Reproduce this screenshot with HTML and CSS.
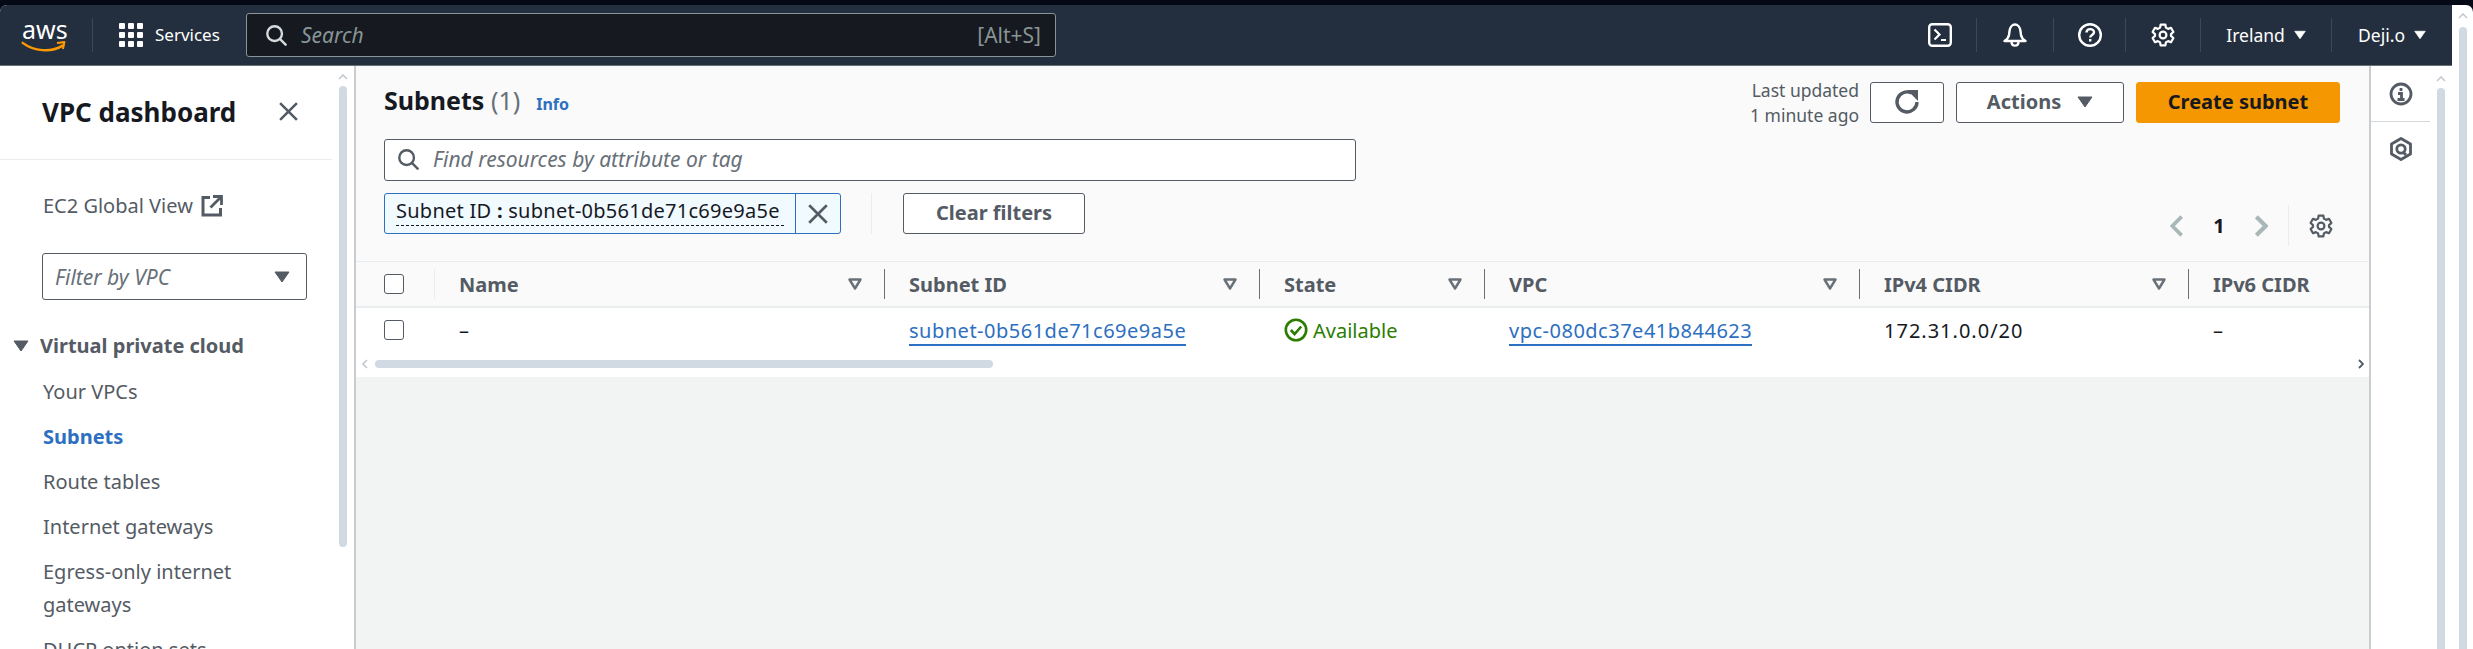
FILE: index.html
```html
<!DOCTYPE html>
<html lang="en">
<head>
  <meta charset="UTF-8">
  <title>Subnets | VPC Console</title>
  <link rel="stylesheet" href="styles.css">
</head>
<body>
  <svg class="sprite" xmlns="http://www.w3.org/2000/svg">
    <symbol id="gear" viewBox="0 0 24 24">
      <path d="M9.6 1.600h4.800l.5 3 2.200 1.300 2.900-1.100 2.400 4.200-2.400 2.100v1.800l2.400 2.100-2.400 4.200-2.900-1.100-2.200 1.300-.5 3H9.600l-.5-3-2.200-1.300-2.900 1.100-2.400-4.200L4 12.900v-1.800L1.600 9l2.400-4.200 2.900 1.100 2.200-1.300z" fill="none" stroke="currentColor" stroke-width="2.200" stroke-linejoin="round"/>
      <circle cx="12" cy="12" r="3.400" fill="none" stroke="currentColor" stroke-width="2.200"/>
    </symbol>
    <symbol id="caret" viewBox="0 0 16 12">
      <path d="M1 1h14L8 11z" fill="currentColor" stroke="currentColor" stroke-linejoin="round"/>
    </symbol>
    <symbol id="sort" viewBox="0 0 14 12">
      <path d="M1.500 1.500h11L7 10.500z" fill="none" stroke="currentColor" stroke-width="2.400" stroke-linejoin="round"/>
    </symbol>
    <symbol id="search" viewBox="0 0 24 24">
      <circle cx="10.500" cy="10.500" r="8" fill="none" stroke="currentColor" stroke-width="2.600"/>
      <path d="M16.500 16.500l6 6" fill="none" stroke="currentColor" stroke-width="2.600" stroke-linecap="round"/>
    </symbol>
    <symbol id="close" viewBox="0 0 20 20">
      <path d="M2 2l16 16M18 2L2 18" fill="none" stroke="currentColor" stroke-width="2.400"/>
    </symbol>
    <symbol id="chev-up" viewBox="0 0 10 6">
      <path d="M1 5l4-4 4 4" fill="none" stroke="currentColor" stroke-width="1.600"/>
    </symbol>
    <symbol id="chev-left" viewBox="0 0 6 10">
      <path d="M5 1L1 5l4 4" fill="none" stroke="currentColor" stroke-width="1.600"/>
    </symbol>
    <symbol id="chev-right" viewBox="0 0 6 10">
      <path d="M1 1l4 4-4 4" fill="none" stroke="currentColor" stroke-width="1.800"/>
    </symbol>
  </svg>

  <div class="page">
    <div class="console">
      <header class="topbar">
        <div class="logo">
          <span class="logo-text">aws</span>
          <svg class="logo-smile" viewBox="0 0 48 14"><path d="M1 2c12 9 30 11 43 3" fill="none" stroke="#f90" stroke-width="2.600" stroke-linecap="round"/><path d="M38 2.200l8-1-1.600 7.500" fill="none" stroke="#f90" stroke-width="2.200" stroke-linejoin="round"/></svg>
        </div>
        <div class="services">
          <div class="grid-icon"><i></i><i></i><i></i><i></i><i></i><i></i><i></i><i></i><i></i></div>
          <span>Services</span>
        </div>
        <div class="top-search">
          <svg class="top-search-icon"><use href="#search"/></svg>
          <span class="top-search-text">Search</span>
          <span class="top-search-key">[Alt+S]</span>
        </div>
        <div class="top-right">
          <div class="top-item terminal">
            <svg class="top-icon" viewBox="0 0 24 24"><rect x="1.200" y="1.200" width="21.600" height="21.600" rx="3" fill="none" stroke="#fff" stroke-width="2.400"/><path d="M6.500 6.500l5 5-5 5" fill="none" stroke="#fff" stroke-width="2.200"/><path d="M13 17h5" stroke="#fff" stroke-width="2.200"/></svg>
          </div>
          <div class="top-item bell">
            <svg class="top-icon" viewBox="0 0 24 24"><path d="M1.500 18c2.500-1.500 4-3 4.500-6l.5-4C7 4 9.500 1.500 12 1.500S17 4 17.500 8l.5 4c.5 3 2 4.500 4.500 6z" fill="none" stroke="#fff" stroke-width="2.400" stroke-linejoin="round"/><path d="M8.500 18.500c0 5.500 7 5.500 7 0" fill="none" stroke="#fff" stroke-width="2.400"/></svg>
          </div>
          <div class="top-item help">
            <svg class="top-icon" viewBox="0 0 24 24"><circle cx="12" cy="12" r="10.800" fill="none" stroke="#fff" stroke-width="2.400"/><path d="M8.500 9.500c0-4.500 7.500-4.500 7.500-.300 0 2.800-3.800 2.800-3.800 5.300" fill="none" stroke="#fff" stroke-width="2.400"/><path d="M12.200 16v2.500" stroke="#fff" stroke-width="2.400"/></svg>
          </div>
          <div class="top-item cog">
            <svg class="top-icon"><use href="#gear"/></svg>
          </div>
          <div class="top-item region">
            <span>Ireland</span>
            <svg class="top-caret"><use href="#caret"/></svg>
          </div>
          <div class="top-item account">
            <span>Deji.o</span>
            <svg class="top-caret"><use href="#caret"/></svg>
          </div>
        </div>
      </header>

      <div class="layout">
        <aside class="sidebar">
          <div class="side-content">
            <div class="side-head">
              <h2>VPC dashboard</h2>
              <svg class="side-close"><use href="#close"/></svg>
            </div>
            <div class="side-link">
              <span>EC2 Global View</span>
              <svg class="ext-icon" viewBox="0 0 22 22"><path d="M9 2.500H2v17.500h17.500V13" fill="none" stroke="currentColor" stroke-width="3"/><path d="M12 1.500h8.500V10M20 2L9.500 12.500" fill="none" stroke="currentColor" stroke-width="2.800"/></svg>
            </div>
            <div class="side-filter">
              <span>Filter by VPC</span>
              <svg class="side-caret"><use href="#caret"/></svg>
            </div>
            <div class="side-section">
              <svg class="section-caret"><use href="#caret"/></svg>
              <span>Virtual private cloud</span>
            </div>
            <ul class="side-list">
              <li>Your VPCs</li>
              <li class="active">Subnets</li>
              <li>Route tables</li>
              <li>Internet gateways</li>
              <li>Egress-only internet gateways</li>
              <li>DHCP option sets</li>
            </ul>
          </div>
          <div class="vscroll">
            <svg class="scroll-up"><use href="#chev-up"/></svg>
            <div class="scroll-thumb short"></div>
          </div>
        </aside>

        <main class="main">
          <section class="list-head">
            <div class="head-row">
              <div class="head-title">
                <h1>Subnets <span class="count">(1)</span></h1>
                <a class="info">Info</a>
              </div>
              <div class="head-actions">
                <div class="updated">Last updated<br>1 minute ago</div>
                <button class="btn btn-refresh">
                  <svg class="refresh-icon" viewBox="0 0 26 26"><path d="M17.500 4A10 10 0 1 0 23 13" fill="none" stroke="currentColor" stroke-width="3.400"/><path d="M15.500 2H23v7.500z" fill="currentColor" stroke="currentColor" stroke-width="2"/></svg>
                </button>
                <button class="btn btn-actions">Actions <svg class="btn-caret"><use href="#caret"/></svg></button>
                <button class="btn btn-primary">Create subnet</button>
              </div>
            </div>
            <div class="find">
              <svg class="find-icon"><use href="#search"/></svg>
              <span>Find resources by attribute or tag</span>
            </div>
            <div class="filter-row">
              <div class="chip">
                <div class="chip-body"><span class="chip-text">Subnet ID <b>:</b> subnet-0b561de71c69e9a5e</span></div>
                <span class="chip-close"><svg class="chip-x"><use href="#close"/></svg></span>
              </div>
              <div class="filter-sep"></div>
              <button class="btn btn-clear">Clear filters</button>
              <div class="pager">
                <svg class="pager-arrow"><use href="#chev-left"/></svg>
                <span class="pager-num">1</span>
                <svg class="pager-arrow"><use href="#chev-right"/></svg>
                <div class="pager-gear"><svg class="gear-icon"><use href="#gear"/></svg></div>
              </div>
            </div>
          </section>

          <section class="table-wrap">
            <table class="subnets">
              <colgroup>
                <col class="col-check">
                <col class="col-name">
                <col class="col-subnet">
                <col class="col-state">
                <col class="col-vpc">
                <col class="col-cidr4">
                <col class="col-cidr6">
              </colgroup>
              <thead>
                <tr>
                  <th class="check-cell"><div class="th-inner light"><span class="checkbox"></span></div></th>
                  <th><div class="th-inner"><span>Name</span><svg class="sort"><use href="#sort"/></svg></div></th>
                  <th><div class="th-inner"><span>Subnet ID</span><svg class="sort"><use href="#sort"/></svg></div></th>
                  <th><div class="th-inner"><span>State</span><svg class="sort"><use href="#sort"/></svg></div></th>
                  <th><div class="th-inner"><span>VPC</span><svg class="sort"><use href="#sort"/></svg></div></th>
                  <th><div class="th-inner"><span>IPv4 CIDR</span><svg class="sort"><use href="#sort"/></svg></div></th>
                  <th><div class="th-inner last"><span>IPv6 CIDR</span></div></th>
                </tr>
              </thead>
              <tbody>
                <tr>
                  <td class="check-cell"><span class="checkbox"></span></td>
                  <td>–</td>
                  <td><a class="link">subnet-0b561de71c69e9a5e</a></td>
                  <td>
                    <span class="status">
                      <svg class="status-icon" viewBox="0 0 24 24"><circle cx="12" cy="12" r="10.200" fill="none" stroke="currentColor" stroke-width="2.600"/><path d="M6.800 12l3.800 4 6.600-7.500" fill="none" stroke="currentColor" stroke-width="2.600"/></svg>
                      Available
                    </span>
                  </td>
                  <td><a class="link">vpc-080dc37e41b844623</a></td>
                  <td class="cidr">172.31.0.0/20</td>
                  <td>–</td>
                </tr>
              </tbody>
            </table>
            <div class="hscroll">
              <svg class="hscroll-left"><use href="#chev-left"/></svg>
              <div class="hscroll-thumb"></div>
              <svg class="hscroll-right"><use href="#chev-right"/></svg>
            </div>
          </section>
        </main>

        <aside class="tools">
          <div class="tools-icons">
            <div class="tool first">
              <svg class="tool-icon" viewBox="0 0 24 24"><circle cx="12" cy="12" r="10" fill="none" stroke="currentColor" stroke-width="2.800"/><path d="M12 6v3M9 11.500h3.500V17M8.500 17.500h7" fill="none" stroke="currentColor" stroke-width="2.800"/></svg>
            </div>
            <div class="tool second">
              <svg class="tool-icon" viewBox="0 0 24 24"><path d="M12 1.500l9.500 5.500v10L12 22.500 2.500 17V7z" fill="none" stroke="currentColor" stroke-width="2.800" stroke-linejoin="round"/><circle cx="12" cy="12" r="4.200" fill="none" stroke="currentColor" stroke-width="2.800"/><path d="M14 15l3 3" stroke="currentColor" stroke-width="2.800"/></svg>
            </div>
          </div>
          <div class="vscroll tools-scroll">
            <svg class="scroll-up"><use href="#chev-up"/></svg>
            <div class="scroll-thumb"></div>
          </div>
        </aside>
      </div>
    </div>

    <div class="vscroll page-scroll">
      <svg class="scroll-up"><use href="#chev-up"/></svg>
      <div class="scroll-thumb"></div>
    </div>
  </div>
</body>
</html>
```

FILE: styles.css
```css
* {
  box-sizing: border-box;
}
html, body {
  height: 100%;
}
body {
  margin: 0;
  background: #050815;
  padding-top: 5px;
  overflow: hidden;
  font-family: "Noto Sans", Arial, sans-serif;
  font-size: 20px;
  color: #16191f;
}
h1, h2, ul {
  margin: 0;
  padding: 0;
}
svg {
  display: block;
  flex: none;
}
.sprite {
  display: none;
}
.page {
  display: flex;
  height: 644px;
  background: #fff;
  border-radius: 7px 7px 0 0;
  overflow: hidden;
}
.console {
  flex: 1;
  min-width: 0;
  display: flex;
  flex-direction: column;
}

/* top navigation */
.topbar {
  flex: none;
  display: flex;
  align-items: center;
  height: 61px;
  padding: 0 0 1px 20px;
  background: #232f3e;
  border-bottom: 1px solid #687078;
  color: #fff;
}
.logo {
  width: 73px;
  height: 34px;
  border-right: 1px solid #414750;
}
.logo-text {
  display: block;
  font-size: 25px;
  line-height: 22px;
  padding-left: 2px;
}
.logo-smile {
  width: 48px;
  height: 13px;
  margin-top: 1px;
}
.services {
  display: flex;
  align-items: center;
  margin-left: 26px;
  width: 127px;
  font-size: 17px;
}
.grid-icon {
  display: grid;
  grid-template-columns: repeat(3, 6px);
  grid-template-rows: repeat(3, 6px);
  gap: 3px;
  margin-right: 12px;
}
.grid-icon i {
  background: #fff;
  border-radius: 1px;
}
.top-search {
  display: flex;
  align-items: center;
  width: 810px;
  height: 44px;
  padding: 0 14px 0 18px;
  background: #16191f;
  border: 1px solid #879596;
  border-radius: 3px;
}
.top-search-icon {
  width: 22px;
  height: 22px;
  color: #d5dbdb;
}
.top-search-text {
  margin-left: 14px;
  font-style: italic;
  font-size: 21px;
  color: #879596;
}
.top-search-key {
  margin-left: auto;
  font-size: 21px;
  color: #879596;
}
.top-right {
  margin-left: auto;
  display: flex;
  align-items: center;
}
.top-item {
  display: flex;
  align-items: center;
  justify-content: center;
  height: 34px;
  border-left: 1px solid #414750;
  font-size: 17.5px;
}
.top-item.terminal {
  width: 72px;
  border-left: 0;
}
.top-item.bell {
  width: 77px;
}
.top-item.help {
  width: 72px;
}
.top-item.cog {
  width: 75px;
}
.top-item.region {
  width: 131px;
}
.top-item.account {
  width: 121px;
}
.top-icon {
  width: 24px;
  height: 24px;
}
.top-caret {
  width: 12px;
  height: 10px;
  margin-left: 9px;
}

/* main three columns */
.layout {
  flex: 1;
  min-height: 0;
  display: flex;
}

/* left navigation */
.sidebar {
  flex: none;
  display: flex;
  width: 356px;
  border-right: 2px solid #c9cdd1;
  overflow: hidden;
}
.side-content {
  width: 332px;
  flex: none;
}
.side-head {
  display: flex;
  align-items: center;
  justify-content: space-between;
  height: 94px;
  padding: 0 33px 2px 42px;
  border-bottom: 1px solid #eaeded;
}
.side-head h2 {
  font-size: 26px;
  font-weight: 700;
}
.side-close {
  width: 21px;
  height: 21px;
  color: #545b64;
}
.side-link {
  display: flex;
  align-items: center;
  margin-top: 32px;
  padding-left: 43px;
  color: #545b64;
  line-height: 28px;
}
.ext-icon {
  width: 22px;
  height: 22px;
  margin-left: 8px;
}
.side-filter {
  display: flex;
  align-items: center;
  justify-content: space-between;
  width: 265px;
  height: 47px;
  margin: 33px 0 0 42px;
  padding: 0 16px 0 12px;
  border: 1px solid #545b64;
  border-radius: 3px;
  font-size: 21px;
  font-style: italic;
  color: #687078;
}
.side-caret {
  width: 16px;
  height: 12px;
  color: #545b64;
}
.side-section {
  display: flex;
  align-items: center;
  margin-top: 31px;
  padding-left: 13px;
  font-weight: 700;
  color: #545b64;
  line-height: 30px;
}
.section-caret {
  width: 16px;
  height: 12px;
  margin-right: 11px;
}
.side-list {
  list-style: none;
  margin-top: 14px;
  padding-left: 43px;
  padding-right: 70px;
  color: #545b64;
}
.side-list li {
  margin-bottom: 12px;
  line-height: 33px;
}
.side-list .active {
  color: #2d6fc0;
  font-weight: 700;
}

/* scrollbars */
.vscroll {
  flex: none;
  width: 22px;
  display: flex;
  flex-direction: column;
  align-items: center;
  padding-top: 8px;
  color: #c4c9cf;
}
.scroll-up {
  width: 10px;
  height: 6px;
}
.scroll-thumb {
  flex: 1;
  width: 8px;
  margin-top: 6px;
  background: #d1d9e3;
  border-radius: 4px 4px 0 0;
}
.scroll-thumb.short {
  flex: none;
  height: 461px;
  border-radius: 4px;
}
.page-scroll {
  width: 21px;
  padding-top: 8px;
}
.page-scroll .scroll-thumb {
  margin-top: 8px;
}

/* list header */
.main {
  flex: 1;
  min-width: 0;
  background: #f2f3f3;
}
.list-head {
  height: 196px;
  padding: 16px 29px 0 28px;
  background: #fafafa;
  border-bottom: 1px solid #eaeded;
}
.head-row {
  display: flex;
  justify-content: space-between;
  height: 41px;
}
.head-title {
  display: flex;
  align-items: baseline;
}
.head-title h1 {
  font-size: 25px;
  font-weight: 700;
  line-height: 36px;
}
.count {
  font-weight: 400;
  color: #687078;
}
.info {
  margin-left: 16px;
  font-size: 16px;
  font-weight: 700;
  color: #2d6fc0;
}
.head-actions {
  display: flex;
  gap: 12px;
}
.updated {
  margin-right: -1px;
  margin-top: -4px;
  text-align: right;
  font-size: 17.5px;
  line-height: 25px;
  color: #545b64;
}
.btn {
  height: 41px;
  padding: 0 0 2px;
  background: #fff;
  border: 1px solid #545b64;
  border-radius: 3px;
  font-family: inherit;
  font-size: 20px;
  font-weight: 700;
  color: #545b64;
}
.btn-refresh {
  width: 74px;
  display: flex;
  align-items: center;
  justify-content: center;
}
.refresh-icon {
  width: 26px;
  height: 26px;
}
.btn-actions {
  width: 168px;
  display: flex;
  align-items: center;
  justify-content: center;
  gap: 16px;
}
.btn-caret {
  width: 16px;
  height: 12px;
}
.btn-primary {
  width: 204px;
  background: #f59700;
  border-color: #f59700;
  color: #16191f;
}
.find {
  display: flex;
  align-items: center;
  width: 972px;
  height: 42px;
  margin-top: 16px;
  padding: 0 0 2px 12px;
  background: #fff;
  border: 1px solid #545b64;
  border-radius: 3px;
  font-size: 21px;
  font-style: italic;
  color: #687078;
}
.find-icon {
  width: 22px;
  height: 22px;
  margin-right: 14px;
  color: #545b64;
}
.filter-row {
  display: flex;
  align-items: flex-start;
  margin-top: 12px;
}
.chip {
  display: flex;
  width: 457px;
  height: 41px;
  background: #f1faff;
  border: 1px solid #2d6fc0;
  border-radius: 3px;
}
.chip-body {
  flex: 1;
  padding: 0 11px;
  white-space: nowrap;
  overflow: hidden;
}
.chip-text {
  display: block;
  height: 32px;
  line-height: 34px;
  letter-spacing: .26px;
  border-bottom: 1px dashed #16191f;
}
.chip-text b {
  font-weight: 700;
}
.chip-close {
  flex: none;
  display: flex;
  align-items: center;
  justify-content: center;
  width: 45px;
  border-left: 1px solid #2d6fc0;
  color: #545b64;
}
.chip-x {
  width: 22px;
  height: 22px;
}
.filter-sep {
  width: 1px;
  height: 41px;
  margin: 0 31px 0 30px;
  background: #eaeded;
}
.btn-clear {
  width: 182px;
}
.pager {
  margin-left: auto;
  margin-top: 12px;
  margin-right: 7px;
  display: flex;
  align-items: center;
  height: 41px;
}
.pager-arrow {
  width: 14px;
  height: 24px;
  color: #aab7b8;
}
.pager-num {
  width: 70px;
  text-align: center;
  font-weight: 700;
}
.pager-gear {
  display: flex;
  align-items: center;
  height: 41px;
  margin-left: 20px;
  padding-left: 20px;
  border-left: 1px solid #eaeded;
  color: #545b64;
}
.gear-icon {
  width: 24px;
  height: 24px;
}

/* table */
.table-wrap {
  background: #fff;
}
.subnets {
  width: 100%;
  table-layout: fixed;
  border-collapse: collapse;
}
.col-check {
  width: 79px;
}
.col-name {
  width: 450px;
}
.col-subnet {
  width: 375px;
}
.col-state {
  width: 225px;
}
.col-vpc {
  width: 375px;
}
.col-cidr4 {
  width: 329px;
}
.subnets th {
  height: 45px;
  padding: 0;
  background: #fafafa;
  border-bottom: 2px solid #eaeded;
  text-align: left;
  font-weight: 700;
  color: #545b64;
}
.th-inner {
  display: flex;
  align-items: center;
  justify-content: space-between;
  height: 30px;
  padding: 0 22px 0 24px;
  border-right: 1px solid #687078;
}
.th-inner.light {
  padding-left: 28px;
  border-right-color: #eaeded;
}
.th-inner.last {
  border-right: 0;
}
.sort {
  width: 14px;
  height: 12px;
  color: #687078;
}
.subnets td {
  height: 47px;
  padding: 0 0 2px 24px;
  white-space: nowrap;
}
.subnets td.check-cell {
  padding-left: 28px;
}
.checkbox {
  display: block;
  width: 20px;
  height: 20px;
  background: #fff;
  border: 1px solid #545b64;
  border-radius: 3px;
}
.link {
  color: #2d6fc0;
  border-bottom: 2px solid #2d6fc0;
  letter-spacing: .5px;
}
.subnets td.cidr {
  letter-spacing: 1px;
}
.status {
  display: flex;
  align-items: center;
  gap: 5px;
  color: #2b7d00;
}
.status-icon {
  width: 24px;
  height: 24px;
}
.hscroll {
  display: flex;
  align-items: center;
  height: 23px;
  padding: 0 5px 3px 6px;
}
.hscroll-left {
  width: 6px;
  height: 10px;
  color: #c4c9cf;
}
.hscroll-thumb {
  width: 618px;
  height: 8px;
  margin-left: 7px;
  background: #d1d9e3;
  border-radius: 4px;
}
.hscroll-right {
  width: 6px;
  height: 10px;
  margin-left: auto;
  color: #545b64;
}

/* right tools panel */
.tools {
  flex: none;
  display: flex;
  width: 83px;
  border-left: 2px solid #c9cdd1;
}
.tools-icons {
  width: 59px;
  flex: none;
}
.tool {
  display: flex;
  align-items: center;
  justify-content: center;
  height: 56px;
  color: #545b64;
}
.tool.first {
  border-bottom: 1px solid #d5dbdb;
}
.tool.second {
  height: 54px;
}
.tool-icon {
  width: 24px;
  height: 24px;
}
.tools-scroll {
  width: 22px;
  padding-top: 10px;
}
```
